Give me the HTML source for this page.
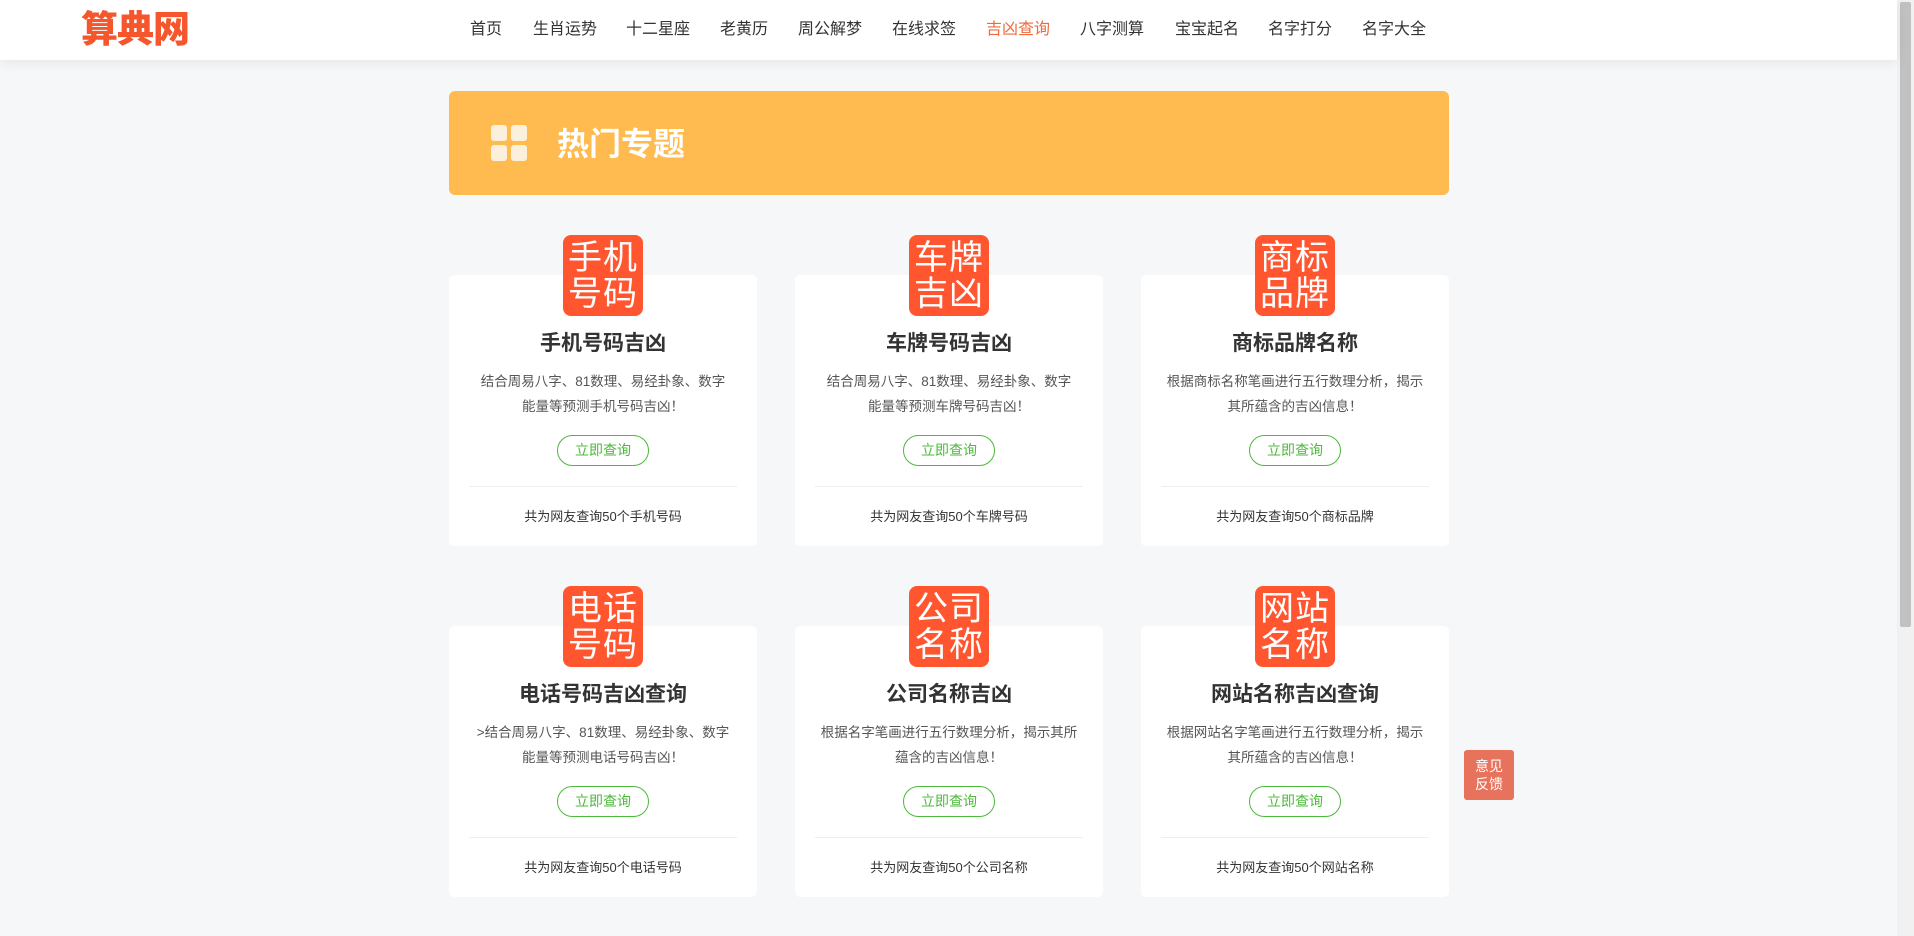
<!DOCTYPE html>
<html><head><meta charset="utf-8"><style>
*{margin:0;padding:0;box-sizing:border-box}
body{width:1914px;height:936px;overflow:hidden;background:#f6f7f9;font-family:"Liberation Sans","Noto Sans CJK SC",sans-serif;position:relative}
.hd{position:absolute;left:0;top:0;width:1897px;height:60px;background:#fff;box-shadow:0 2px 12px rgba(0,0,0,.08);z-index:2}
.logo{position:absolute;left:81px;top:8px;font-size:37px;font-weight:900;color:#f5562b;letter-spacing:-1px;line-height:44px}
.nav a{position:absolute;top:19px;font-size:16px;color:#333;text-decoration:none;line-height:22px}
.sb{position:absolute;left:1897px;top:0;width:17px;height:936px;background:#f1f1f1}
.sb i{position:absolute;left:3px;top:2px;width:11px;height:625px;background:#c1c1c1;border-radius:2px}
.ban{position:absolute;left:449px;top:91px;width:1000px;height:104px;background:#ffbb4f;border-radius:6px}
.ban .ic{position:absolute;left:42px;top:34px;width:36px;height:36px}
.ban .ic i{position:absolute;width:16px;height:16px;background:#fbf0dc;border-radius:3px}
.ban h2{position:absolute;left:108px;top:32px;font-size:32px;color:#fff;font-weight:bold;line-height:42px}
.card{position:absolute;width:308px;height:271px;background:#fff;border-radius:5px;text-align:center}
.tile{position:absolute;width:80px;height:81px;background:#ff5630;border-radius:8px;color:#fff;font-size:34px;line-height:36px;text-align:center;padding-top:5px;letter-spacing:1px}
.card h3{position:absolute;top:55px;left:0;width:100%;font-size:21px;color:#333;font-weight:bold;line-height:28px}
.card p{position:absolute;top:95px;left:14px;width:280px;font-size:13.5px;color:#555;line-height:24.5px}
.card .btn{position:absolute;top:160px;left:108px;width:92px;height:31px;border:1px solid #4cba3a;border-radius:16px;color:#4cba3a;font-size:14px;line-height:29px}
.card .ln{position:absolute;top:211px;left:20px;width:268px;height:1px;background:#eee}
.card .ft{position:absolute;top:233px;left:0;width:100%;font-size:13px;color:#333;line-height:18px}
.fb{position:absolute;left:1464px;top:750px;width:50px;height:50px;background:#e8735c;border-radius:3px;color:#fff;font-size:14px;line-height:18px;text-align:center;padding-top:7px}
</style></head><body>
<div class="hd">
<div class="logo">算典网</div>
<div class="nav">
<a style="left:470px">首页</a><a style="left:533px">生肖运势</a><a style="left:626px">十二星座</a><a style="left:720px">老黄历</a><a style="left:798px">周公解梦</a><a style="left:892px">在线求签</a><a style="left:986px;color:#f06a3c">吉凶查询</a><a style="left:1080px">八字测算</a><a style="left:1175px">宝宝起名</a><a style="left:1268px">名字打分</a><a style="left:1362px">名字大全</a>
</div></div>
<div class="sb"><i></i></div>
<div class="ban"><div class="ic"><i style="left:0;top:0"></i><i style="left:20px;top:0"></i><i style="left:0;top:20px"></i><i style="left:20px;top:20px"></i></div><h2>热门专题</h2></div>

<div class="card" style="left:449px;top:275px"><h3>手机号码吉凶</h3><p>结合周易八字、81数理、易经卦象、数字<br>能量等预测手机号码吉凶！</p><div class="btn">立即查询</div><div class="ln"></div><div class="ft">共为网友查询50个手机号码</div></div>
<div class="card" style="left:795px;top:275px"><h3>车牌号码吉凶</h3><p>结合周易八字、81数理、易经卦象、数字<br>能量等预测车牌号码吉凶！</p><div class="btn">立即查询</div><div class="ln"></div><div class="ft">共为网友查询50个车牌号码</div></div>
<div class="card" style="left:1141px;top:275px"><h3>商标品牌名称</h3><p>根据商标名称笔画进行五行数理分析，揭示<br>其所蕴含的吉凶信息！</p><div class="btn">立即查询</div><div class="ln"></div><div class="ft">共为网友查询50个商标品牌</div></div>
<div class="card" style="left:449px;top:626px"><h3>电话号码吉凶查询</h3><p>&gt;结合周易八字、81数理、易经卦象、数字<br>能量等预测电话号码吉凶！</p><div class="btn">立即查询</div><div class="ln"></div><div class="ft">共为网友查询50个电话号码</div></div>
<div class="card" style="left:795px;top:626px"><h3>公司名称吉凶</h3><p>根据名字笔画进行五行数理分析，揭示其所<br>蕴含的吉凶信息！</p><div class="btn">立即查询</div><div class="ln"></div><div class="ft">共为网友查询50个公司名称</div></div>
<div class="card" style="left:1141px;top:626px"><h3>网站名称吉凶查询</h3><p>根据网站名字笔画进行五行数理分析，揭示<br>其所蕴含的吉凶信息！</p><div class="btn">立即查询</div><div class="ln"></div><div class="ft">共为网友查询50个网站名称</div></div>

<div class="tile" style="left:563px;top:235px">手机<br>号码</div>
<div class="tile" style="left:909px;top:235px">车牌<br>吉凶</div>
<div class="tile" style="left:1255px;top:235px">商标<br>品牌</div>
<div class="tile" style="left:563px;top:586px">电话<br>号码</div>
<div class="tile" style="left:909px;top:586px">公司<br>名称</div>
<div class="tile" style="left:1255px;top:586px">网站<br>名称</div>
<div class="fb">意见<br>反馈</div>
</body></html>
